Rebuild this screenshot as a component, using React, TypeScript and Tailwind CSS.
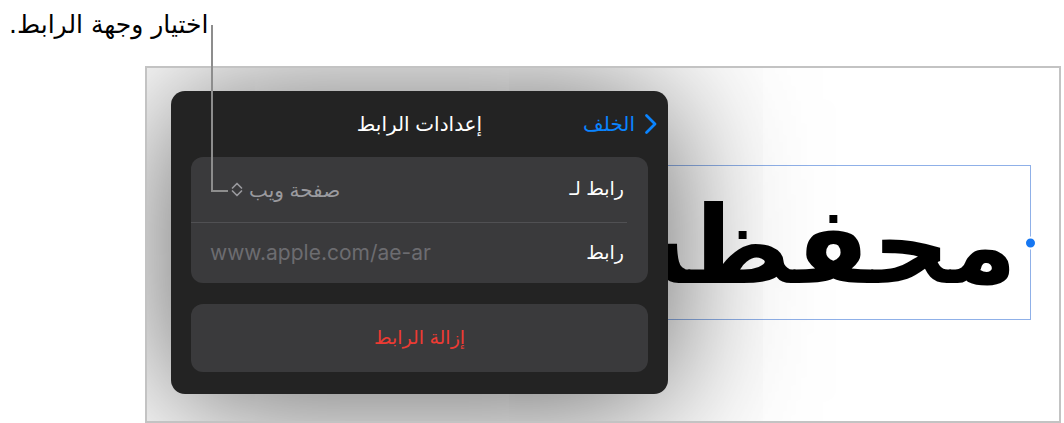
const ui = "font-['Inter','DejaVu_Sans',sans-serif]";

function UpDownIcon() {
  return (
    <svg width="12" height="15" viewBox="0 0 12 15" fill="none" className="shrink-0">
      <path d="M1.5 6 L6 1.5 L10.5 6" stroke="#98989d" strokeWidth="1.7" strokeLinecap="round" strokeLinejoin="round" />
      <path d="M1.5 9 L6 13.5 L10.5 9" stroke="#98989d" strokeWidth="1.7" strokeLinecap="round" strokeLinejoin="round" />
    </svg>
  );
}

function BackChevron() {
  return (
    <svg width="14" height="22" viewBox="0 0 14 22" fill="none" className="shrink-0">
      <path d="M2.5 2.5 L11 11 L2.5 19.5" stroke="#0a84ff" strokeWidth="2.8" strokeLinecap="round" strokeLinejoin="round" />
    </svg>
  );
}

function LinkPopover() {
  return (
    <div
      dir="rtl"
      className={`absolute left-[24px] top-[23px] z-10 flex h-[303px] w-[497px] flex-col rounded-[14px] bg-[#232323] px-[20px] pb-[22px] shadow-[0_8px_140px_rgba(0,0,0,0.65)] ${ui}`}
    >
      {/* header */}
      <div className="relative flex h-[66px] shrink-0 items-center">
        <div className="-mr-[10px] flex items-center gap-[9px]">
          <BackChevron />
          <span className="text-[20px] text-[#0a84ff]">الخلف</span>
        </div>
        <span className="absolute inset-x-0 text-center text-[20px] text-white">
          إعدادات الرابط
        </span>
      </div>

      {/* link target + url */}
      <div className="flex flex-col rounded-[12px] bg-[#3a3a3c]">
        <div className="flex h-[65px] items-center justify-between pr-[24px] pl-[40px]">
          <span className="text-[19px] text-white">رابط لـ</span>
          <span className="flex items-center gap-[6px] text-[20px] text-[#9a9a9f]">
            صفحة ويب
            <UpDownIcon />
          </span>
        </div>
        <div className="mr-[21px] h-px bg-[#505053]" />
        <div className="flex h-[60px] items-center justify-between pr-[24px] pl-[19px]">
          <span className="text-[19px] text-white">رابط</span>
          <span dir="ltr" className="text-[21px] text-[#6c6c70]">
            www.apple.com/ae-ar
          </span>
        </div>
      </div>

      <div className="mt-[21px] flex h-[69px] items-center justify-center rounded-[12px] bg-[#3a3a3c]">
        <span className="text-[19px] text-[#ec3a33]">إزالة الرابط</span>
      </div>
    </div>
  );
}

export default function App() {
  return (
    <div className="relative h-[423px] w-[1064px] overflow-hidden bg-white pl-[145px] pt-[66px]">
      {/* callout */}
      <div
        dir="rtl"
        className="absolute left-[9px] top-[6px] z-20 text-[25px] leading-[38px] text-black font-['DejaVu_Sans',sans-serif]"
      >
        اختيار وجهة الرابط.
      </div>
      <div className="absolute left-[211px] top-[25px] z-20 h-[167px] w-[17px] border-b-2 border-l-2 border-[#8d8d8d]" />

      {/* canvas */}
      <div className="relative h-[357px] w-[916px] overflow-hidden border-2 border-[#c3c3c3] bg-white">
        {/* selected text box; its left part lies under the popover */}
        <div className="absolute right-[28px] top-[97px] h-[155px] w-[520px] border border-[#8fb0e8]">
          <div className="absolute inset-y-0 left-[156px] right-0 flex items-center justify-end overflow-hidden pr-[13px]">
            <span
              dir="rtl"
              className="whitespace-nowrap pt-[6px] text-[108px] font-bold leading-none text-black font-['DejaVu_Sans',sans-serif]"
            >
              محفظة
            </span>
          </div>
          <span className="absolute -right-[7px] top-1/2 h-[13px] w-[13px] -translate-y-1/2 rounded-full border-2 border-white bg-[#1677f2]" />
        </div>

        <LinkPopover />
      </div>
    </div>
  );
}
